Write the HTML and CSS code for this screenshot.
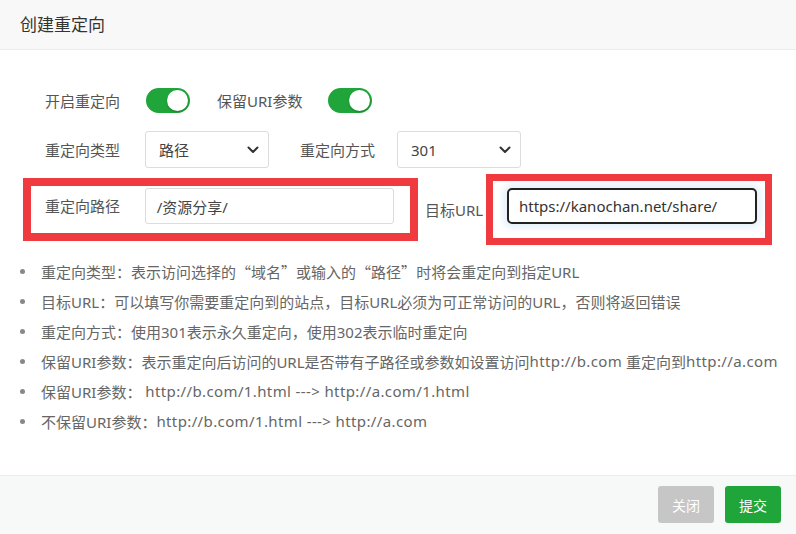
FILE: index.html
```html
<!DOCTYPE html>
<html lang="zh-CN">
<head>
<meta charset="utf-8">
<title>创建重定向</title>
<link rel="stylesheet" href="styles.css">
</head>
<body>
<div class="dialog">
  <div class="header">创建重定向</div>
  <div class="content">
    <div class="row row-switch">
      <span class="label w1">开启重定向</span>
      <span class="switch"><span class="knob"></span></span>
      <span class="label w2">保留URI参数</span>
      <span class="switch"><span class="knob"></span></span>
    </div>
    <div class="row row-select">
      <span class="label w1">重定向类型</span>
      <div class="select"><span>路径</span>
        <svg class="chev" width="12" height="8" viewBox="0 0 12 8"><path d="M1.5 1.5 L6 6 L10.5 1.5" fill="none" stroke="#333" stroke-width="2" stroke-linecap="round" stroke-linejoin="round"/></svg>
      </div>
      <span class="label w3">重定向方式</span>
      <div class="select"><span>301</span>
        <svg class="chev" width="12" height="8" viewBox="0 0 12 8"><path d="M1.5 1.5 L6 6 L10.5 1.5" fill="none" stroke="#333" stroke-width="2" stroke-linecap="round" stroke-linejoin="round"/></svg>
      </div>
    </div>
    <div class="row row-input">
      <div class="mark mark-left">
        <span class="label w1">重定向路径</span>
        <div class="input">/资源分享/</div>
      </div>
      <span class="label target">目标URL</span>
      <div class="mark mark-right">
        <div class="input focus">https://kanochan.net/share/</div>
      </div>
    </div>
    <ul class="tips">
      <li>重定向类型：表示访问选择的<span class="q">“</span>域名<span class="q">”</span>或输入的<span class="q">“</span>路径<span class="q">”</span>时将会重定向到指定URL</li>
      <li>目标URL：可以填写你需要重定向到的站点，目标URL必须为可正常访问的URL，否则将返回错误</li>
      <li>重定向方式：使用301表示永久重定向，使用302表示临时重定向</li>
      <li>保留URI参数：表示重定向后访问的URL是否带有子路径或参数如设置访问<span class="u">http://b.com</span>&nbsp;重定向到<span class="u">http://a.com</span></li>
      <li>保留URI参数：&nbsp;<span class="u">http://b.com/1.html ---&gt; http://a.com/1.html</span></li>
      <li>不保留URI参数：<span class="u">http://b.com/1.html ---&gt; http://a.com</span></li>
    </ul>
  </div>
  <div class="footer">
    <button class="btn btn-close">关闭</button>
    <button class="btn btn-submit">提交</button>
  </div>
</div>
</body>
</html>
```
FILE: styles.css
```css
* { box-sizing: border-box; }
html, body { margin: 0; padding: 0; }
body {
  width: 796px;
  height: 534px;
  overflow: hidden;
  background: #fff;
  font-family: "Noto Sans", "Noto Sans CJK SC", sans-serif;
  color: #333;
}
.dialog {
  display: flex;
  flex-direction: column;
  height: 534px;
}
.header {
  height: 50px;
  line-height: 49px;
  padding-left: 20px;
  font-size: 17px;
  color: #333;
  background: #f8f8f8;
  border-bottom: 1px solid #ececec;
}
.content {
  flex: 1;
}
.row {
  display: flex;
  align-items: center;
}
.label {
  font-size: 15px;
  color: #555;
  white-space: nowrap;
}
.w1 { width: 100px; }
.row-switch .w1 { width: 101px; }
.w2 { width: 111px; margin-left: 27px; }
.w3 { width: 97px; margin-left: 31px; }
.row-switch {
  margin-top: 38px;
  height: 25px;
  padding-left: 45px;
}
.switch {
  width: 44px;
  height: 25px;
  border-radius: 13px;
  background: #20a53a;
  display: flex;
  align-items: center;
  justify-content: flex-end;
  padding-right: 2px;
}
.knob {
  width: 21px;
  height: 21px;
  border-radius: 50%;
  background: #fff;
  box-shadow: 0 1px 2px rgba(0,0,0,.25);
}
.row-select {
  margin-top: 18px;
  height: 37px;
  padding-left: 45px;
}
.select {
  width: 124px;
  height: 37px;
  border: 1px solid #dcdcdc;
  border-radius: 3px;
  display: flex;
  align-items: center;
  justify-content: space-between;
  padding: 0 9px 0 13px;
  font-size: 15px;
  color: #444;
}
.row-input {
  margin-top: 6px;
  height: 71px;
  padding-left: 23px;
}
.mark {
  border: 8px solid #ef3b40;
  display: flex;
}
.mark-left {
  width: 395px;
  height: 63px;
  padding: 2px 16px 0 14px;
  align-items: flex-start;
}
.mark-left .label {
  height: 36px;
  line-height: 36px;
  width: 100px;
}
.mark-left .input {
  width: 250px;
}
.target {
  width: 61px;
  margin-left: 7px;
}
.mark-right {
  width: 286px;
  height: 71px;
  border-width: 7px;
  padding: 7px 8px 0 14px;
  align-items: flex-start;
}
.input {
  height: 36px;
  border: 1px solid #dcdcdc;
  border-radius: 3px;
  display: flex;
  align-items: center;
  padding-left: 11px;
  font-size: 15px;
  color: #444;
}
.input.focus {
  width: 250px;
  border: 2px solid #222;
  border-radius: 5px;
  padding-left: 10px;
  color: #333;
  box-shadow: 0 0 6px 4px rgba(120, 170, 230, .18);
}
.tips {
  list-style: none;
  margin: 11px 0 0;
  padding: 0;
}
.tips li {
  height: 30px;
  display: flex;
  align-items: center;
  font-size: 15px;
  color: #666;
  white-space: pre;
}
.tips li::before {
  content: "";
  width: 5px;
  height: 5px;
  border-radius: 50%;
  background: #888;
  margin-left: 20px;
  margin-right: 16px;
  flex: none;
}
.q {
  font-family: "Noto Sans CJK SC", sans-serif;
}
.u {
  letter-spacing: 0.38px;
}
.footer {
  height: 59px;
  border-top: 1px solid #ececec;
  background: #f7f8f8;
  display: flex;
  justify-content: flex-end;
  align-items: flex-start;
  padding: 10px 15px 0 0;
  gap: 11px;
}
.btn {
  width: 56px;
  height: 37px;
  border: 0;
  border-radius: 3px;
  font-family: "Noto Sans", "Noto Sans CJK SC", sans-serif;
  font-size: 14px;
  color: #fff;
  padding: 0;
}
.btn-close { background: #c6c6c6; }
.btn-submit { background: #20a53a; }
```
